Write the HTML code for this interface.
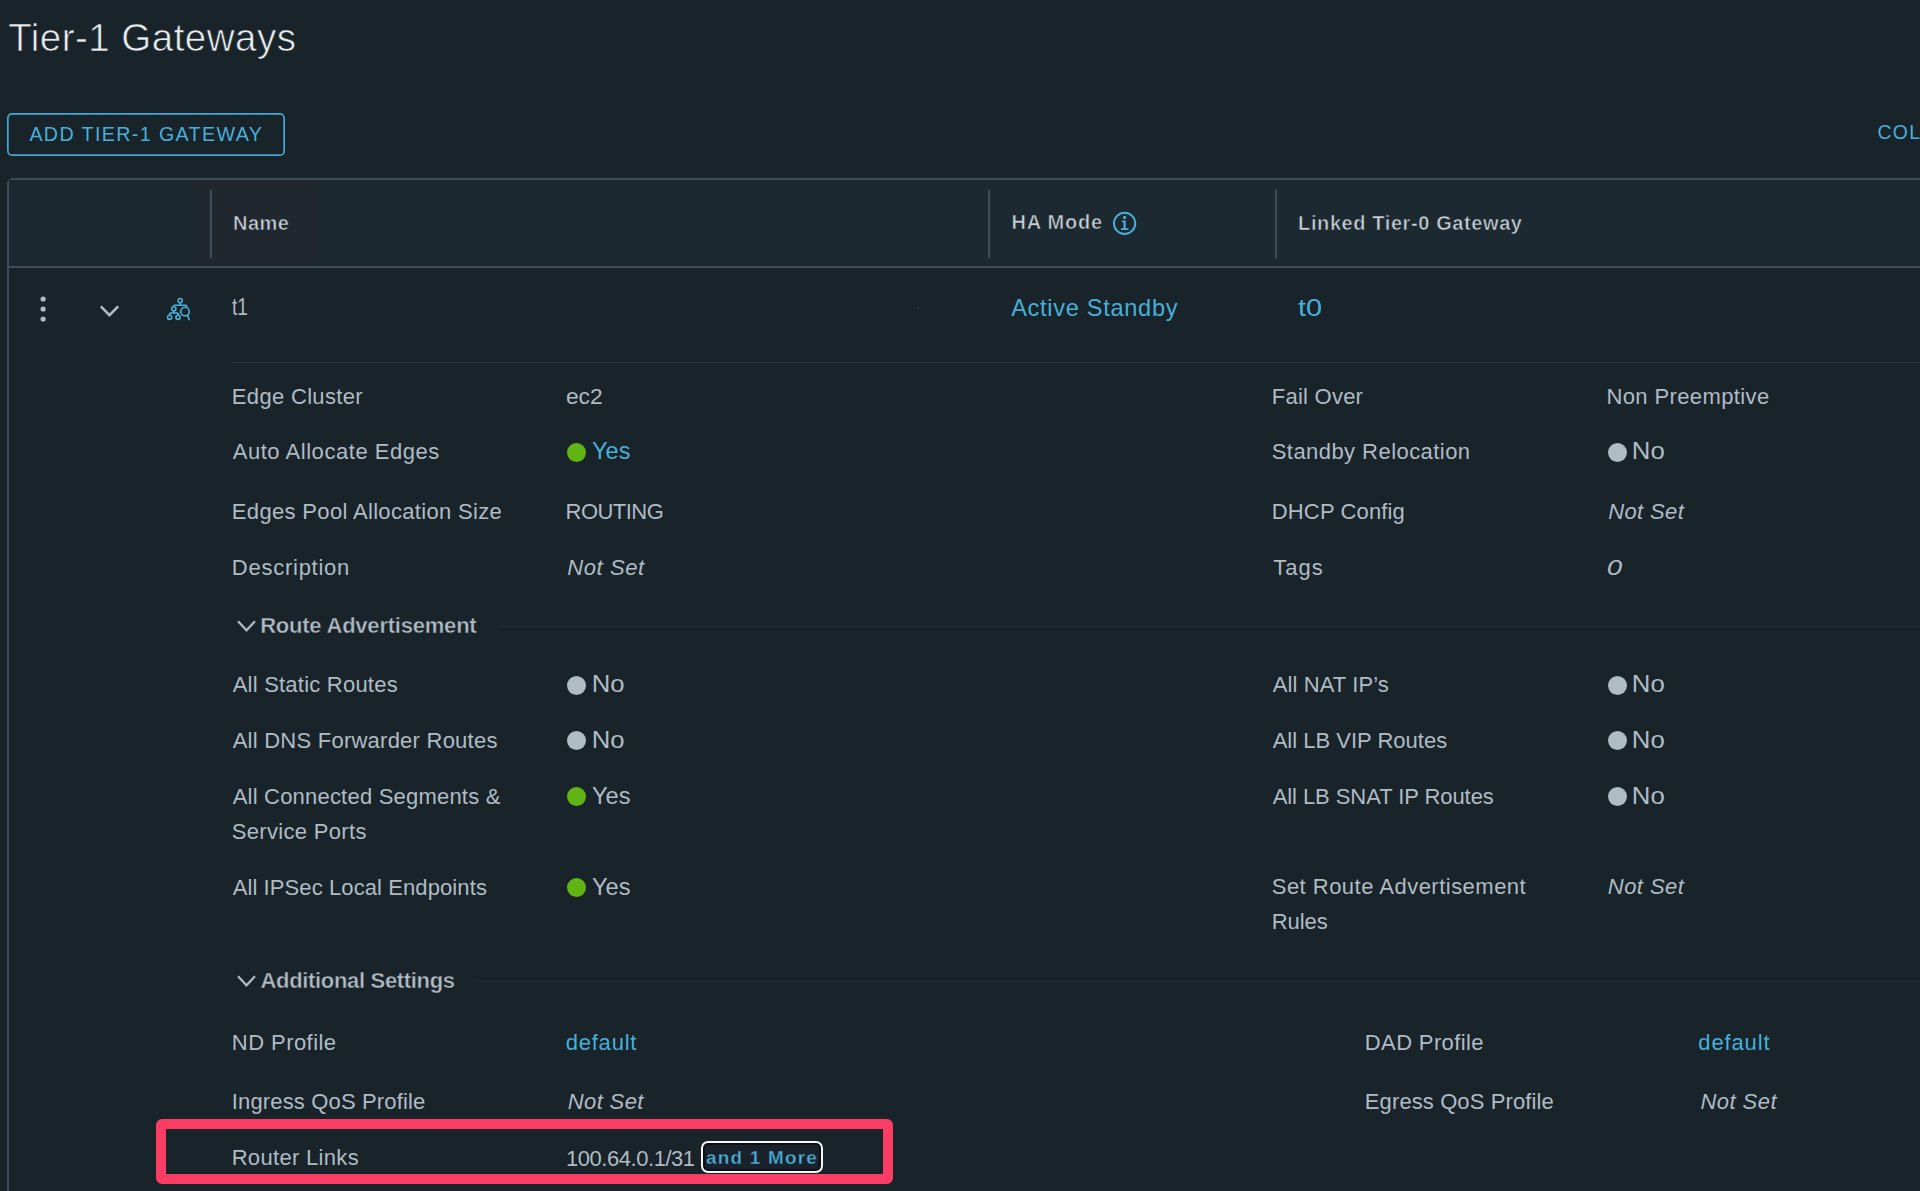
<!DOCTYPE html>
<html><head><meta charset="utf-8"><title>Tier-1 Gateways</title>
<style>
html,body{margin:0;padding:0;}
body{width:1920px;height:1191px;overflow:hidden;background:#18232a;position:relative;font-family:"Liberation Sans",sans-serif;}
.t{position:absolute;white-space:pre;line-height:60px;}
.b{position:absolute;box-sizing:border-box;}
svg{position:absolute;left:0;top:0;}
</style></head><body>

<div class="b" style="left:7px;top:178px;width:2000px;height:1100px;border:2px solid #404d58;border-radius:6px"></div>
<div class="b" style="left:9px;top:180px;width:1911px;height:86px;background:#1c2931"></div>
<div class="b" style="left:193px;top:180px;width:125px;height:86px;background:#20272f"></div>
<div class="b" style="left:9px;top:266px;width:1911px;height:2px;background:#404d58"></div>
<div class="b" style="left:210px;top:190px;width:2px;height:68px;background:#404d58"></div>
<div class="b" style="left:988px;top:190px;width:2px;height:68px;background:#404d58"></div>
<div class="b" style="left:1275px;top:190px;width:2px;height:68px;background:#404d58"></div>
<div class="b" style="left:232px;top:362px;width:1688px;height:1px;background:#26333b"></div>
<div class="b" style="left:497px;top:626px;width:1423px;height:1px;background:#232f37"></div>
<div class="b" style="left:476px;top:981px;width:1444px;height:1px;background:#232f37"></div>
<div class="b" style="left:917px;top:307px;width:2px;height:2px;border-radius:1px;background:#35424b"></div>
<div class="b" style="left:567.2px;top:442.7px;width:19px;height:19px;border-radius:50%;background:#60b515"></div>
<div class="b" style="left:567.2px;top:787.1px;width:19px;height:19px;border-radius:50%;background:#60b515"></div>
<div class="b" style="left:567.2px;top:877.9px;width:19px;height:19px;border-radius:50%;background:#60b515"></div>
<div class="b" style="left:567.2px;top:675.6px;width:19px;height:19px;border-radius:50%;background:#b0bcc4"></div>
<div class="b" style="left:567.2px;top:731.4px;width:19px;height:19px;border-radius:50%;background:#b0bcc4"></div>
<div class="b" style="left:1607.6px;top:442.7px;width:19px;height:19px;border-radius:50%;background:#b0bcc4"></div>
<div class="b" style="left:1607.6px;top:675.6999999999999px;width:19px;height:19px;border-radius:50%;background:#b0bcc4"></div>
<div class="b" style="left:1607.6px;top:731.4px;width:19px;height:19px;border-radius:50%;background:#b0bcc4"></div>
<div class="b" style="left:1607.6px;top:787.0px;width:19px;height:19px;border-radius:50%;background:#b0bcc4"></div>
<div class="b" style="left:156px;top:1119px;width:737px;height:65px;border:10px solid #fa3d65;border-radius:6px"></div>
<div class="b" style="left:701px;top:1140.5px;width:122px;height:32.5px;border:2px solid #f4f6f7;border-radius:7px;background:#19222a;box-shadow:inset 0 0 0 2px #0e1114"></div>
<svg width="1920" height="1191" viewBox="0 0 1920 1191">
<rect x="7.85" y="113.85" width="276.3" height="41.3" rx="4.2" fill="none" stroke="#46a8d6" stroke-width="1.7"/>
<g fill="#b0bbc3"><circle cx="43.1" cy="299" r="2.6"/><circle cx="43.1" cy="309" r="2.6"/><circle cx="43.1" cy="319" r="2.6"/></g>
<polyline points="100.8,306.3 109.5,315.2 118.2,306.3" fill="none" stroke="#b0bbc3" stroke-width="2.6"/>
<g fill="none" stroke="#49afd9" stroke-width="1.6">
<circle cx="180.2" cy="300.6" r="2.1"/>
<path d="M180.2 302.7V305.2M173.6 305.2H186.6M173.8 305.2V306.7M186.6 305.2V307.2"/>
<circle cx="173.8" cy="308.8" r="2.1"/>
<path d="M173.8 310.9V313M169.6 313H178.2M169.6 313V315.2M178.2 313V315.2"/>
<circle cx="169.6" cy="317.3" r="2.1"/>
<circle cx="178" cy="317.3" r="2.1"/>
<circle cx="185" cy="311.6" r="4.3"/>
<path d="M187.6 315.3L189 319.4" stroke-linecap="round"/>
</g>
<circle cx="1124.6" cy="223.4" r="10.6" fill="none" stroke="#49afd9" stroke-width="2"/>
<g fill="#49afd9"><circle cx="1124.6" cy="217.4" r="1.6"/>
<path d="M1122.1 220.5H1125.7V228.3H1128.4V230.1H1121V228.3H1123.5V222.3H1122.1Z"/></g>
<polyline points="238,621.3 246.5,630.3 255,621.3" fill="none" stroke="#b0bbc3" stroke-width="2.2"/>
<polyline points="238,976.3 246.5,985.3 255,976.3" fill="none" stroke="#b0bbc3" stroke-width="2.2"/>
</svg>
<div class="t" style="left:8.15px;top:7.80px;font-size:38.5px;color:#e9edf0;-webkit-text-stroke:0.7px #18232a;letter-spacing:0.487px">Tier-1 Gateways</div>
<div class="t" style="left:29.38px;top:103.91px;font-size:19.7px;color:#49afd9;letter-spacing:1.366px">ADD TIER-1 GATEWAY</div>
<div class="t" style="left:233.11px;top:193.00px;font-size:20.0px;color:#c9d1d7;font-weight:700;-webkit-text-stroke:0.6px #20272f;letter-spacing:0.390px">Name</div>
<div class="t" style="left:1011.41px;top:191.50px;font-size:20.0px;color:#c9d1d7;font-weight:700;-webkit-text-stroke:0.6px #1c2931;letter-spacing:0.782px">HA Mode</div>
<div class="t" style="left:1298.11px;top:192.70px;font-size:20.0px;color:#c9d1d7;font-weight:700;-webkit-text-stroke:0.6px #1c2931;letter-spacing:0.597px">Linked Tier-0 Gateway</div>
<div class="t" style="left:232.29px;top:277.32px;font-size:23.6px;color:#b0bbc3;transform:scaleX(0.8051);transform-origin:0.41px 0">t1</div>
<div class="t" style="left:1011.18px;top:277.52px;font-size:23.6px;color:#49afd9;letter-spacing:0.691px">Active Standby</div>
<div class="t" style="left:1298.49px;top:277.52px;font-size:23.6px;color:#49afd9;transform:scaleX(1.2267);transform-origin:0.41px 0">t0</div>
<div class="t" style="left:231.85px;top:367.14px;font-size:22px;color:#b0bbc3;letter-spacing:0.322px">Edge Cluster</div>
<div class="t" style="left:565.63px;top:367.14px;font-size:22px;color:#b0bbc3;transform:scaleX(1.0350);transform-origin:1.12px 0">ec2</div>
<div class="t" style="left:232.68px;top:422.34px;font-size:22px;color:#b0bbc3;letter-spacing:0.543px">Auto Allocate Edges</div>
<div class="t" style="left:591.65px;top:421.33px;font-size:23.2px;color:#49afd9;transform:scaleX(1.0180);transform-origin:1.05px 0">Yes</div>
<div class="t" style="left:231.85px;top:481.79px;font-size:22px;color:#b0bbc3;letter-spacing:0.331px">Edges Pool Allocation Size</div>
<div class="t" style="left:565.60px;top:481.79px;font-size:22px;color:#b0bbc3;letter-spacing:-0.536px">ROUTING</div>
<div class="t" style="left:231.85px;top:537.54px;font-size:22px;color:#b0bbc3;letter-spacing:0.741px">Description</div>
<div class="t" style="left:567.36px;top:537.54px;font-size:22px;color:#b0bbc3;font-style:italic;letter-spacing:0.559px">Not Set</div>
<div class="t" style="left:260.15px;top:596.25px;font-size:22px;color:#b0bbc3;font-weight:700;-webkit-text-stroke:0.4px #18232a;letter-spacing:-0.217px">Route Advertisement</div>
<div class="t" style="left:232.68px;top:655.24px;font-size:22px;color:#b0bbc3;letter-spacing:0.224px">All Static Routes</div>
<div class="t" style="left:591.91px;top:654.23px;font-size:23.2px;color:#b0bbc3;transform:scaleX(1.1079);transform-origin:2.09px 0">No</div>
<div class="t" style="left:232.68px;top:711.04px;font-size:22px;color:#b0bbc3;letter-spacing:0.242px">All DNS Forwarder Routes</div>
<div class="t" style="left:591.91px;top:710.03px;font-size:23.2px;color:#b0bbc3;transform:scaleX(1.1079);transform-origin:2.09px 0">No</div>
<div class="t" style="left:232.68px;top:766.74px;font-size:22px;color:#b0bbc3;letter-spacing:0.206px">All Connected Segments &amp;</div>
<div class="t" style="left:591.65px;top:765.73px;font-size:23.2px;color:#b0bbc3;transform:scaleX(1.0180);transform-origin:1.05px 0">Yes</div>
<div class="t" style="left:231.73px;top:801.79px;font-size:22px;color:#b0bbc3;letter-spacing:0.324px">Service Ports</div>
<div class="t" style="left:232.68px;top:857.54px;font-size:22px;color:#b0bbc3;letter-spacing:0.095px">All IPSec Local Endpoints</div>
<div class="t" style="left:591.65px;top:856.53px;font-size:23.2px;color:#b0bbc3;transform:scaleX(1.0180);transform-origin:1.05px 0">Yes</div>
<div class="t" style="left:260.52px;top:951.25px;font-size:22px;color:#b0bbc3;font-weight:700;-webkit-text-stroke:0.4px #18232a;letter-spacing:-0.327px">Additional Settings</div>
<div class="t" style="left:231.85px;top:1013.34px;font-size:22px;color:#b0bbc3;letter-spacing:0.440px">ND Profile</div>
<div class="t" style="left:565.66px;top:1013.34px;font-size:22px;color:#49afd9;letter-spacing:0.792px">default</div>
<div class="t" style="left:231.74px;top:1072.04px;font-size:22px;color:#b0bbc3;letter-spacing:0.154px">Ingress QoS Profile</div>
<div class="t" style="left:567.86px;top:1072.04px;font-size:22px;color:#b0bbc3;font-style:italic;letter-spacing:0.350px">Not Set</div>
<div class="t" style="left:231.65px;top:1128.04px;font-size:22px;color:#b0bbc3;letter-spacing:0.320px">Router Links</div>
<div class="t" style="left:566.02px;top:1129.04px;font-size:22px;color:#b0bbc3;letter-spacing:-0.458px">100.64.0.1/31</div>
<div class="t" style="left:705.89px;top:1127.50px;font-size:18.0px;color:#49afd9;font-weight:700;-webkit-text-stroke:0.3px #19222a;letter-spacing:1.2px;transform:scaleX(1.0476);transform-origin:0.61px 0">and 1 More</div>
<div class="t" style="left:1271.85px;top:367.14px;font-size:22px;color:#b0bbc3;letter-spacing:0.230px">Fail Over</div>
<div class="t" style="left:1606.45px;top:367.14px;font-size:22px;color:#b0bbc3;letter-spacing:0.390px">Non Preemptive</div>
<div class="t" style="left:1271.73px;top:422.34px;font-size:22px;color:#b0bbc3;letter-spacing:0.445px">Standby Relocation</div>
<div class="t" style="left:1632.11px;top:421.33px;font-size:23.2px;color:#b0bbc3;transform:scaleX(1.1116);transform-origin:2.09px 0">No</div>
<div class="t" style="left:1271.85px;top:481.79px;font-size:22px;color:#b0bbc3;letter-spacing:0.125px">DHCP Config</div>
<div class="t" style="left:1608.26px;top:481.79px;font-size:22px;color:#b0bbc3;font-style:italic;letter-spacing:0.367px">Not Set</div>
<div class="t" style="left:1273.37px;top:537.54px;font-size:22px;color:#b0bbc3;letter-spacing:0.933px">Tags</div>
<div class="t" style="left:1607.28px;top:537.54px;font-size:22px;color:#b0bbc3;font-style:italic;transform:scaleX(1.2574);transform-origin:1.12px 0">0</div>
<div class="t" style="left:1272.68px;top:655.34px;font-size:22px;color:#b0bbc3;letter-spacing:0.111px">All NAT IP’s</div>
<div class="t" style="left:1632.11px;top:654.33px;font-size:23.2px;color:#b0bbc3;transform:scaleX(1.1116);transform-origin:2.09px 0">No</div>
<div class="t" style="left:1272.68px;top:711.04px;font-size:22px;color:#b0bbc3">All LB VIP Routes</div>
<div class="t" style="left:1632.11px;top:710.03px;font-size:23.2px;color:#b0bbc3;transform:scaleX(1.1116);transform-origin:2.09px 0">No</div>
<div class="t" style="left:1272.68px;top:766.64px;font-size:22px;color:#b0bbc3;letter-spacing:-0.071px">All LB SNAT IP Routes</div>
<div class="t" style="left:1632.11px;top:765.63px;font-size:23.2px;color:#b0bbc3;transform:scaleX(1.1116);transform-origin:2.09px 0">No</div>
<div class="t" style="left:1271.73px;top:857.44px;font-size:22px;color:#b0bbc3;letter-spacing:0.483px">Set Route Advertisement</div>
<div class="t" style="left:1271.85px;top:892.04px;font-size:22px;color:#b0bbc3;letter-spacing:-0.114px">Rules</div>
<div class="t" style="left:1607.86px;top:857.44px;font-size:22px;color:#b0bbc3;font-style:italic;letter-spacing:0.434px">Not Set</div>
<div class="t" style="left:1364.85px;top:1012.94px;font-size:22px;color:#b0bbc3;letter-spacing:0.364px">DAD Profile</div>
<div class="t" style="left:1698.31px;top:1012.94px;font-size:22px;color:#49afd9;letter-spacing:0.859px">default</div>
<div class="t" style="left:1364.85px;top:1071.84px;font-size:22px;color:#b0bbc3;letter-spacing:0.102px">Egress QoS Profile</div>
<div class="t" style="left:1700.46px;top:1071.84px;font-size:22px;color:#b0bbc3;font-style:italic;letter-spacing:0.450px">Not Set</div>
<div class="t" style="left:1877.40px;top:102.40px;font-size:19.4px;color:#49afd9;letter-spacing:1.366px">COLLAPSE ALL</div>
</body></html>
